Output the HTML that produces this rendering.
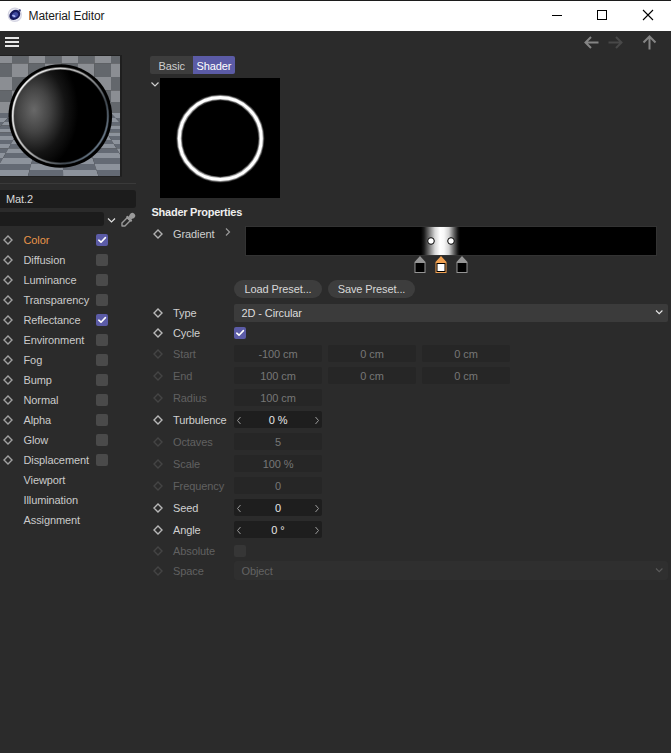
<!DOCTYPE html><html><head><meta charset="utf-8"><style>
html,body{margin:0;padding:0;}
body{width:671px;height:753px;background:#2b2b2b;position:relative;overflow:hidden;font-family:"Liberation Sans",sans-serif;}
.a{position:absolute;}
.t{position:absolute;white-space:nowrap;line-height:1;letter-spacing:-0.1px;}
</style></head><body>
<div class="a" style="left:0px;top:0px;width:671px;height:1px;background:#1c1c1c;border-radius:0px;"></div>
<div class="a" style="left:0px;top:1px;width:671px;height:30px;background:#ffffff;border-radius:0px;"></div>
<svg class="a" style="left:5px;top:5px" width="20" height="20"><defs><filter id="ib" x="-30%" y="-30%" width="160%" height="160%"><feGaussianBlur stdDeviation="0.8"/></filter></defs><g><g transform="translate(-5,-5)"><circle cx="14.8" cy="14.8" r="6.6" fill="#eeeef6" stroke="#d4d4e2" stroke-width="1.2"/><ellipse cx="14.8" cy="14.9" rx="5.9" ry="4.7" transform="rotate(-38 14.8 14.9)" fill="#161a5c"/><ellipse cx="15" cy="15" rx="3.4" ry="2.6" transform="rotate(-38 15 15)" fill="#3f4aa0"/><ellipse cx="13.8" cy="15.9" rx="1.8" ry="1.0" transform="rotate(20 13.8 15.9)" fill="#aab4f0"/><circle cx="19.8" cy="10.4" r="1.1" fill="#3a4080"/></g></g></svg>
<div class="t" style="left:28.5px;top:9.84px;font-size:12px;color:#1a1a1a;font-weight:normal;">Material Editor</div>
<div class="a" style="left:552px;top:15px;width:10px;height:1px;background:#000;border-radius:0px;"></div>
<div class="a" style="left:597px;top:10px;width:8px;height:8px;border:1px solid #000"></div>
<svg class="a" style="left:642px;top:9px" width="12" height="12"><path d="M1 1 L11 11 M11 1 L1 11" stroke="#000" stroke-width="1.1"/></svg>
<div class="a" style="left:5px;top:37px;width:14px;height:2px;background:#e8e8e8;border-radius:0px;"></div>
<div class="a" style="left:5px;top:41px;width:14px;height:2px;background:#e8e8e8;border-radius:0px;"></div>
<div class="a" style="left:5px;top:45px;width:14px;height:2px;background:#e8e8e8;border-radius:0px;"></div>
<svg class="a" style="left:583px;top:35px" width="17" height="15"><path d="M15.5 7.5 H2.5 M8 2 L2.5 7.5 L8 13" fill="none" stroke="#858585" stroke-width="2"/></svg>
<svg class="a" style="left:607px;top:35px" width="17" height="15"><path d="M1.5 7.5 H14.5 M9 2 L14.5 7.5 L9 13" fill="none" stroke="#484848" stroke-width="2"/></svg>
<svg class="a" style="left:642px;top:34px" width="15" height="16"><path d="M7.5 15.5 V2.5 M1.5 8.5 L7.5 2.5 L13.5 8.5" fill="none" stroke="#858585" stroke-width="2"/></svg>
<div class="a" style="left:0px;top:55px;width:122px;height:1px;background:#1f1f1f;border-radius:0px;"></div>
<svg class="a" style="left:0;top:56px" width="120" height="120">
<defs>
<filter id="cb" x="-5%" y="-5%" width="110%" height="110%"><feGaussianBlur stdDeviation="0.8"/></filter>
<radialGradient id="sph" gradientUnits="userSpaceOnUse" cx="34" cy="54" r="58" gradientTransform="translate(34 54) scale(0.9 1.25) translate(-34 -54)">
<stop offset="0" stop-color="#686868"/><stop offset="0.3" stop-color="#444444"/><stop offset="0.6" stop-color="#141414"/><stop offset="0.85" stop-color="#000"/>
</radialGradient>
<linearGradient id="rim" gradientUnits="userSpaceOnUse" x1="12" y1="30" x2="108" y2="95">
<stop offset="0" stop-color="#ffffff"/><stop offset="0.45" stop-color="#b0b0b0"/><stop offset="0.75" stop-color="#404850"/><stop offset="1" stop-color="#8094a8"/>
</linearGradient>
</defs>
<g><rect x="-4.5" y="0" width="16.5" height="7.5" fill="#8b8e93"/>
<rect x="12.0" y="0" width="16.5" height="7.5" fill="#63676c"/>
<rect x="28.5" y="0" width="16.5" height="7.5" fill="#8b8e93"/>
<rect x="45.0" y="0" width="16.5" height="7.5" fill="#63676c"/>
<rect x="61.5" y="0" width="16.5" height="7.5" fill="#8b8e93"/>
<rect x="78.0" y="0" width="16.5" height="7.5" fill="#63676c"/>
<rect x="94.5" y="0" width="16.5" height="7.5" fill="#8b8e93"/>
<rect x="111.0" y="0" width="16.5" height="7.5" fill="#63676c"/>
<rect x="-4.5" y="7.5" width="16.5" height="13.5" fill="#63676c"/>
<rect x="12.0" y="7.5" width="16.5" height="13.5" fill="#8b8e93"/>
<rect x="28.5" y="7.5" width="16.5" height="13.5" fill="#63676c"/>
<rect x="45.0" y="7.5" width="16.5" height="13.5" fill="#8b8e93"/>
<rect x="61.5" y="7.5" width="16.5" height="13.5" fill="#63676c"/>
<rect x="78.0" y="7.5" width="16.5" height="13.5" fill="#8b8e93"/>
<rect x="94.5" y="7.5" width="16.5" height="13.5" fill="#63676c"/>
<rect x="111.0" y="7.5" width="16.5" height="13.5" fill="#8b8e93"/>
<rect x="-4.5" y="21" width="16.5" height="13.5" fill="#8b8e93"/>
<rect x="12.0" y="21" width="16.5" height="13.5" fill="#63676c"/>
<rect x="28.5" y="21" width="16.5" height="13.5" fill="#8b8e93"/>
<rect x="45.0" y="21" width="16.5" height="13.5" fill="#63676c"/>
<rect x="61.5" y="21" width="16.5" height="13.5" fill="#8b8e93"/>
<rect x="78.0" y="21" width="16.5" height="13.5" fill="#63676c"/>
<rect x="94.5" y="21" width="16.5" height="13.5" fill="#8b8e93"/>
<rect x="111.0" y="21" width="16.5" height="13.5" fill="#63676c"/>
<rect x="-4.5" y="34.5" width="16.5" height="11.5" fill="#63676c"/>
<rect x="12.0" y="34.5" width="16.5" height="11.5" fill="#8b8e93"/>
<rect x="28.5" y="34.5" width="16.5" height="11.5" fill="#63676c"/>
<rect x="45.0" y="34.5" width="16.5" height="11.5" fill="#8b8e93"/>
<rect x="61.5" y="34.5" width="16.5" height="11.5" fill="#63676c"/>
<rect x="78.0" y="34.5" width="16.5" height="11.5" fill="#8b8e93"/>
<rect x="94.5" y="34.5" width="16.5" height="11.5" fill="#63676c"/>
<rect x="111.0" y="34.5" width="16.5" height="11.5" fill="#8b8e93"/>
<rect x="-4.5" y="46" width="16.5" height="11" fill="#8b8e93"/>
<rect x="12.0" y="46" width="16.5" height="11" fill="#63676c"/>
<rect x="28.5" y="46" width="16.5" height="11" fill="#8b8e93"/>
<rect x="45.0" y="46" width="16.5" height="11" fill="#63676c"/>
<rect x="61.5" y="46" width="16.5" height="11" fill="#8b8e93"/>
<rect x="78.0" y="46" width="16.5" height="11" fill="#63676c"/>
<rect x="94.5" y="46" width="16.5" height="11" fill="#8b8e93"/>
<rect x="111.0" y="46" width="16.5" height="11" fill="#63676c"/>
<polygon points="-54.0,57.0 -37.5,57.0 -46.3,62.0 -64.3,62.0" fill="#8d939c"/>
<polygon points="-37.5,57.0 -21.0,57.0 -28.3,62.0 -46.3,62.0" fill="#646a74"/>
<polygon points="-21.0,57.0 -4.5,57.0 -10.3,62.0 -28.3,62.0" fill="#8d939c"/>
<polygon points="-4.5,57.0 12.0,57.0 7.7,62.0 -10.3,62.0" fill="#646a74"/>
<polygon points="12.0,57.0 28.5,57.0 25.7,62.0 7.7,62.0" fill="#8d939c"/>
<polygon points="28.5,57.0 45.0,57.0 43.6,62.0 25.7,62.0" fill="#646a74"/>
<polygon points="45.0,57.0 61.5,57.0 61.6,62.0 43.6,62.0" fill="#8d939c"/>
<polygon points="61.5,57.0 78.0,57.0 79.6,62.0 61.6,62.0" fill="#646a74"/>
<polygon points="78.0,57.0 94.5,57.0 97.6,62.0 79.6,62.0" fill="#8d939c"/>
<polygon points="94.5,57.0 111.0,57.0 115.6,62.0 97.6,62.0" fill="#646a74"/>
<polygon points="111.0,57.0 127.5,57.0 133.6,62.0 115.6,62.0" fill="#8d939c"/>
<polygon points="127.5,57.0 144.0,57.0 151.6,62.0 133.6,62.0" fill="#646a74"/>
<polygon points="144.0,57.0 160.5,57.0 169.5,62.0 151.6,62.0" fill="#8d939c"/>
<polygon points="160.5,57.0 177.0,57.0 187.5,62.0 169.5,62.0" fill="#646a74"/>
<polygon points="177.0,57.0 193.5,57.0 205.5,62.0 187.5,62.0" fill="#8d939c"/>
<polygon points="-64.3,62.0 -46.3,62.0 -53.3,66.0 -72.5,66.0" fill="#646a74"/>
<polygon points="-46.3,62.0 -28.3,62.0 -34.1,66.0 -53.3,66.0" fill="#8d939c"/>
<polygon points="-28.3,62.0 -10.3,62.0 -14.9,66.0 -34.1,66.0" fill="#646a74"/>
<polygon points="-10.3,62.0 7.7,62.0 4.2,66.0 -14.9,66.0" fill="#8d939c"/>
<polygon points="7.7,62.0 25.7,62.0 23.4,66.0 4.2,66.0" fill="#646a74"/>
<polygon points="25.7,62.0 43.6,62.0 42.6,66.0 23.4,66.0" fill="#8d939c"/>
<polygon points="43.6,62.0 61.6,62.0 61.7,66.0 42.6,66.0" fill="#646a74"/>
<polygon points="61.6,62.0 79.6,62.0 80.9,66.0 61.7,66.0" fill="#8d939c"/>
<polygon points="79.6,62.0 97.6,62.0 100.1,66.0 80.9,66.0" fill="#646a74"/>
<polygon points="97.6,62.0 115.6,62.0 119.3,66.0 100.1,66.0" fill="#8d939c"/>
<polygon points="115.6,62.0 133.6,62.0 138.4,66.0 119.3,66.0" fill="#646a74"/>
<polygon points="133.6,62.0 151.6,62.0 157.6,66.0 138.4,66.0" fill="#8d939c"/>
<polygon points="151.6,62.0 169.5,62.0 176.8,66.0 157.6,66.0" fill="#646a74"/>
<polygon points="169.5,62.0 187.5,62.0 196.0,66.0 176.8,66.0" fill="#8d939c"/>
<polygon points="187.5,62.0 205.5,62.0 215.1,66.0 196.0,66.0" fill="#646a74"/>
<polygon points="-72.5,66.0 -53.3,66.0 -59.4,69.5 -79.7,69.5" fill="#8d939c"/>
<polygon points="-53.3,66.0 -34.1,66.0 -39.2,69.5 -59.4,69.5" fill="#646a74"/>
<polygon points="-34.1,66.0 -14.9,66.0 -19.0,69.5 -39.2,69.5" fill="#8d939c"/>
<polygon points="-14.9,66.0 4.2,66.0 1.2,69.5 -19.0,69.5" fill="#646a74"/>
<polygon points="4.2,66.0 23.4,66.0 21.4,69.5 1.2,69.5" fill="#8d939c"/>
<polygon points="23.4,66.0 42.6,66.0 41.6,69.5 21.4,69.5" fill="#646a74"/>
<polygon points="42.6,66.0 61.7,66.0 61.8,69.5 41.6,69.5" fill="#8d939c"/>
<polygon points="61.7,66.0 80.9,66.0 82.0,69.5 61.8,69.5" fill="#646a74"/>
<polygon points="80.9,66.0 100.1,66.0 102.3,69.5 82.0,69.5" fill="#8d939c"/>
<polygon points="100.1,66.0 119.3,66.0 122.5,69.5 102.3,69.5" fill="#646a74"/>
<polygon points="119.3,66.0 138.4,66.0 142.7,69.5 122.5,69.5" fill="#8d939c"/>
<polygon points="138.4,66.0 157.6,66.0 162.9,69.5 142.7,69.5" fill="#646a74"/>
<polygon points="157.6,66.0 176.8,66.0 183.1,69.5 162.9,69.5" fill="#8d939c"/>
<polygon points="176.8,66.0 196.0,66.0 203.3,69.5 183.1,69.5" fill="#646a74"/>
<polygon points="196.0,66.0 215.1,66.0 223.5,69.5 203.3,69.5" fill="#8d939c"/>
<polygon points="-79.7,69.5 -59.4,69.5 -65.6,73.0 -86.8,73.0" fill="#646a74"/>
<polygon points="-59.4,69.5 -39.2,69.5 -44.3,73.0 -65.6,73.0" fill="#8d939c"/>
<polygon points="-39.2,69.5 -19.0,69.5 -23.1,73.0 -44.3,73.0" fill="#646a74"/>
<polygon points="-19.0,69.5 1.2,69.5 -1.8,73.0 -23.1,73.0" fill="#8d939c"/>
<polygon points="1.2,69.5 21.4,69.5 19.4,73.0 -1.8,73.0" fill="#646a74"/>
<polygon points="21.4,69.5 41.6,69.5 40.7,73.0 19.4,73.0" fill="#8d939c"/>
<polygon points="41.6,69.5 61.8,69.5 61.9,73.0 40.7,73.0" fill="#646a74"/>
<polygon points="61.8,69.5 82.0,69.5 83.2,73.0 61.9,73.0" fill="#8d939c"/>
<polygon points="82.0,69.5 102.3,69.5 104.4,73.0 83.2,73.0" fill="#646a74"/>
<polygon points="102.3,69.5 122.5,69.5 125.7,73.0 104.4,73.0" fill="#8d939c"/>
<polygon points="122.5,69.5 142.7,69.5 146.9,73.0 125.7,73.0" fill="#646a74"/>
<polygon points="142.7,69.5 162.9,69.5 168.2,73.0 146.9,73.0" fill="#8d939c"/>
<polygon points="162.9,69.5 183.1,69.5 189.4,73.0 168.2,73.0" fill="#646a74"/>
<polygon points="183.1,69.5 203.3,69.5 210.7,73.0 189.4,73.0" fill="#8d939c"/>
<polygon points="203.3,69.5 223.5,69.5 231.9,73.0 210.7,73.0" fill="#646a74"/>
<polygon points="-86.8,73.0 -65.6,73.0 -71.7,76.5 -94.0,76.5" fill="#8d939c"/>
<polygon points="-65.6,73.0 -44.3,73.0 -49.4,76.5 -71.7,76.5" fill="#646a74"/>
<polygon points="-44.3,73.0 -23.1,73.0 -27.1,76.5 -49.4,76.5" fill="#8d939c"/>
<polygon points="-23.1,73.0 -1.8,73.0 -4.8,76.5 -27.1,76.5" fill="#646a74"/>
<polygon points="-1.8,73.0 19.4,73.0 17.4,76.5 -4.8,76.5" fill="#8d939c"/>
<polygon points="19.4,73.0 40.7,73.0 39.7,76.5 17.4,76.5" fill="#646a74"/>
<polygon points="40.7,73.0 61.9,73.0 62.0,76.5 39.7,76.5" fill="#8d939c"/>
<polygon points="61.9,73.0 83.2,73.0 84.3,76.5 62.0,76.5" fill="#646a74"/>
<polygon points="83.2,73.0 104.4,73.0 106.6,76.5 84.3,76.5" fill="#8d939c"/>
<polygon points="104.4,73.0 125.7,73.0 128.9,76.5 106.6,76.5" fill="#646a74"/>
<polygon points="125.7,73.0 146.9,73.0 151.2,76.5 128.9,76.5" fill="#8d939c"/>
<polygon points="146.9,73.0 168.2,73.0 173.5,76.5 151.2,76.5" fill="#646a74"/>
<polygon points="168.2,73.0 189.4,73.0 195.8,76.5 173.5,76.5" fill="#8d939c"/>
<polygon points="189.4,73.0 210.7,73.0 218.1,76.5 195.8,76.5" fill="#646a74"/>
<polygon points="210.7,73.0 231.9,73.0 240.4,76.5 218.1,76.5" fill="#8d939c"/>
<polygon points="-94.0,76.5 -71.7,76.5 -77.9,80.0 -101.2,80.0" fill="#646a74"/>
<polygon points="-71.7,76.5 -49.4,76.5 -54.5,80.0 -77.9,80.0" fill="#8d939c"/>
<polygon points="-49.4,76.5 -27.1,76.5 -31.2,80.0 -54.5,80.0" fill="#646a74"/>
<polygon points="-27.1,76.5 -4.8,76.5 -7.9,80.0 -31.2,80.0" fill="#8d939c"/>
<polygon points="-4.8,76.5 17.4,76.5 15.5,80.0 -7.9,80.0" fill="#646a74"/>
<polygon points="17.4,76.5 39.7,76.5 38.8,80.0 15.5,80.0" fill="#8d939c"/>
<polygon points="39.7,76.5 62.0,76.5 62.1,80.0 38.8,80.0" fill="#646a74"/>
<polygon points="62.0,76.5 84.3,76.5 85.5,80.0 62.1,80.0" fill="#8d939c"/>
<polygon points="84.3,76.5 106.6,76.5 108.8,80.0 85.5,80.0" fill="#646a74"/>
<polygon points="106.6,76.5 128.9,76.5 132.1,80.0 108.8,80.0" fill="#8d939c"/>
<polygon points="128.9,76.5 151.2,76.5 155.4,80.0 132.1,80.0" fill="#646a74"/>
<polygon points="151.2,76.5 173.5,76.5 178.8,80.0 155.4,80.0" fill="#8d939c"/>
<polygon points="173.5,76.5 195.8,76.5 202.1,80.0 178.8,80.0" fill="#646a74"/>
<polygon points="195.8,76.5 218.1,76.5 225.4,80.0 202.1,80.0" fill="#8d939c"/>
<polygon points="218.1,76.5 240.4,76.5 248.8,80.0 225.4,80.0" fill="#646a74"/>
<polygon points="-101.2,80.0 -77.9,80.0 -84.9,84.0 -109.4,84.0" fill="#8d939c"/>
<polygon points="-77.9,80.0 -54.5,80.0 -60.4,84.0 -84.9,84.0" fill="#646a74"/>
<polygon points="-54.5,80.0 -31.2,80.0 -35.8,84.0 -60.4,84.0" fill="#8d939c"/>
<polygon points="-31.2,80.0 -7.9,80.0 -11.3,84.0 -35.8,84.0" fill="#646a74"/>
<polygon points="-7.9,80.0 15.5,80.0 13.2,84.0 -11.3,84.0" fill="#8d939c"/>
<polygon points="15.5,80.0 38.8,80.0 37.7,84.0 13.2,84.0" fill="#646a74"/>
<polygon points="38.8,80.0 62.1,80.0 62.2,84.0 37.7,84.0" fill="#8d939c"/>
<polygon points="62.1,80.0 85.5,80.0 86.7,84.0 62.2,84.0" fill="#646a74"/>
<polygon points="85.5,80.0 108.8,80.0 111.3,84.0 86.7,84.0" fill="#8d939c"/>
<polygon points="108.8,80.0 132.1,80.0 135.8,84.0 111.3,84.0" fill="#646a74"/>
<polygon points="132.1,80.0 155.4,80.0 160.3,84.0 135.8,84.0" fill="#8d939c"/>
<polygon points="155.4,80.0 178.8,80.0 184.8,84.0 160.3,84.0" fill="#646a74"/>
<polygon points="178.8,80.0 202.1,80.0 209.3,84.0 184.8,84.0" fill="#8d939c"/>
<polygon points="202.1,80.0 225.4,80.0 233.9,84.0 209.3,84.0" fill="#646a74"/>
<polygon points="225.4,80.0 248.8,80.0 258.4,84.0 233.9,84.0" fill="#8d939c"/>
<polygon points="-109.4,84.0 -84.9,84.0 -91.9,88.0 -117.6,88.0" fill="#646a74"/>
<polygon points="-84.9,84.0 -60.4,84.0 -66.2,88.0 -91.9,88.0" fill="#8d939c"/>
<polygon points="-60.4,84.0 -35.8,84.0 -40.5,88.0 -66.2,88.0" fill="#646a74"/>
<polygon points="-35.8,84.0 -11.3,84.0 -14.8,88.0 -40.5,88.0" fill="#8d939c"/>
<polygon points="-11.3,84.0 13.2,84.0 10.9,88.0 -14.8,88.0" fill="#646a74"/>
<polygon points="13.2,84.0 37.7,84.0 36.6,88.0 10.9,88.0" fill="#8d939c"/>
<polygon points="37.7,84.0 62.2,84.0 62.3,88.0 36.6,88.0" fill="#646a74"/>
<polygon points="62.2,84.0 86.7,84.0 88.0,88.0 62.3,88.0" fill="#8d939c"/>
<polygon points="86.7,84.0 111.3,84.0 113.8,88.0 88.0,88.0" fill="#646a74"/>
<polygon points="111.3,84.0 135.8,84.0 139.5,88.0 113.8,88.0" fill="#8d939c"/>
<polygon points="135.8,84.0 160.3,84.0 165.2,88.0 139.5,88.0" fill="#646a74"/>
<polygon points="160.3,84.0 184.8,84.0 190.9,88.0 165.2,88.0" fill="#8d939c"/>
<polygon points="184.8,84.0 209.3,84.0 216.6,88.0 190.9,88.0" fill="#646a74"/>
<polygon points="209.3,84.0 233.9,84.0 242.3,88.0 216.6,88.0" fill="#8d939c"/>
<polygon points="233.9,84.0 258.4,84.0 268.0,88.0 242.3,88.0" fill="#646a74"/>
<polygon points="-117.6,88.0 -91.9,88.0 -99.8,92.5 -126.8,92.5" fill="#8d939c"/>
<polygon points="-91.9,88.0 -66.2,88.0 -72.8,92.5 -99.8,92.5" fill="#646a74"/>
<polygon points="-66.2,88.0 -40.5,88.0 -45.7,92.5 -72.8,92.5" fill="#8d939c"/>
<polygon points="-40.5,88.0 -14.8,88.0 -18.7,92.5 -45.7,92.5" fill="#646a74"/>
<polygon points="-14.8,88.0 10.9,88.0 8.4,92.5 -18.7,92.5" fill="#8d939c"/>
<polygon points="10.9,88.0 36.6,88.0 35.4,92.5 8.4,92.5" fill="#646a74"/>
<polygon points="36.6,88.0 62.3,88.0 62.5,92.5 35.4,92.5" fill="#8d939c"/>
<polygon points="62.3,88.0 88.0,88.0 89.5,92.5 62.5,92.5" fill="#646a74"/>
<polygon points="88.0,88.0 113.8,88.0 116.5,92.5 89.5,92.5" fill="#8d939c"/>
<polygon points="113.8,88.0 139.5,88.0 143.6,92.5 116.5,92.5" fill="#646a74"/>
<polygon points="139.5,88.0 165.2,88.0 170.6,92.5 143.6,92.5" fill="#8d939c"/>
<polygon points="165.2,88.0 190.9,88.0 197.7,92.5 170.6,92.5" fill="#646a74"/>
<polygon points="190.9,88.0 216.6,88.0 224.7,92.5 197.7,92.5" fill="#8d939c"/>
<polygon points="216.6,88.0 242.3,88.0 251.8,92.5 224.7,92.5" fill="#646a74"/>
<polygon points="242.3,88.0 268.0,88.0 278.8,92.5 251.8,92.5" fill="#8d939c"/>
<polygon points="-126.8,92.5 -99.8,92.5 -107.7,97.0 -136.1,97.0" fill="#646a74"/>
<polygon points="-99.8,92.5 -72.8,92.5 -79.3,97.0 -107.7,97.0" fill="#8d939c"/>
<polygon points="-72.8,92.5 -45.7,92.5 -50.9,97.0 -79.3,97.0" fill="#646a74"/>
<polygon points="-45.7,92.5 -18.7,92.5 -22.6,97.0 -50.9,97.0" fill="#8d939c"/>
<polygon points="-18.7,92.5 8.4,92.5 5.8,97.0 -22.6,97.0" fill="#646a74"/>
<polygon points="8.4,92.5 35.4,92.5 34.2,97.0 5.8,97.0" fill="#8d939c"/>
<polygon points="35.4,92.5 62.5,92.5 62.6,97.0 34.2,97.0" fill="#646a74"/>
<polygon points="62.5,92.5 89.5,92.5 91.0,97.0 62.6,97.0" fill="#8d939c"/>
<polygon points="89.5,92.5 116.5,92.5 119.3,97.0 91.0,97.0" fill="#646a74"/>
<polygon points="116.5,92.5 143.6,92.5 147.7,97.0 119.3,97.0" fill="#8d939c"/>
<polygon points="143.6,92.5 170.6,92.5 176.1,97.0 147.7,97.0" fill="#646a74"/>
<polygon points="170.6,92.5 197.7,92.5 204.5,97.0 176.1,97.0" fill="#8d939c"/>
<polygon points="197.7,92.5 224.7,92.5 232.9,97.0 204.5,97.0" fill="#646a74"/>
<polygon points="224.7,92.5 251.8,92.5 261.2,97.0 232.9,97.0" fill="#8d939c"/>
<polygon points="251.8,92.5 278.8,92.5 289.6,97.0 261.2,97.0" fill="#646a74"/>
<polygon points="-136.1,97.0 -107.7,97.0 -116.5,102.0 -146.3,102.0" fill="#8d939c"/>
<polygon points="-107.7,97.0 -79.3,97.0 -86.6,102.0 -116.5,102.0" fill="#646a74"/>
<polygon points="-79.3,97.0 -50.9,97.0 -56.7,102.0 -86.6,102.0" fill="#8d939c"/>
<polygon points="-50.9,97.0 -22.6,97.0 -26.9,102.0 -56.7,102.0" fill="#646a74"/>
<polygon points="-22.6,97.0 5.8,97.0 3.0,102.0 -26.9,102.0" fill="#8d939c"/>
<polygon points="5.8,97.0 34.2,97.0 32.8,102.0 3.0,102.0" fill="#646a74"/>
<polygon points="34.2,97.0 62.6,97.0 62.7,102.0 32.8,102.0" fill="#8d939c"/>
<polygon points="62.6,97.0 91.0,97.0 92.6,102.0 62.7,102.0" fill="#646a74"/>
<polygon points="91.0,97.0 119.3,97.0 122.4,102.0 92.6,102.0" fill="#8d939c"/>
<polygon points="119.3,97.0 147.7,97.0 152.3,102.0 122.4,102.0" fill="#646a74"/>
<polygon points="147.7,97.0 176.1,97.0 182.2,102.0 152.3,102.0" fill="#8d939c"/>
<polygon points="176.1,97.0 204.5,97.0 212.0,102.0 182.2,102.0" fill="#646a74"/>
<polygon points="204.5,97.0 232.9,97.0 241.9,102.0 212.0,102.0" fill="#8d939c"/>
<polygon points="232.9,97.0 261.2,97.0 271.8,102.0 241.9,102.0" fill="#646a74"/>
<polygon points="261.2,97.0 289.6,97.0 301.6,102.0 271.8,102.0" fill="#8d939c"/>
<polygon points="-146.3,102.0 -116.5,102.0 -127.0,108.0 -158.7,108.0" fill="#646a74"/>
<polygon points="-116.5,102.0 -86.6,102.0 -95.4,108.0 -127.0,108.0" fill="#8d939c"/>
<polygon points="-86.6,102.0 -56.7,102.0 -63.7,108.0 -95.4,108.0" fill="#646a74"/>
<polygon points="-56.7,102.0 -26.9,102.0 -32.1,108.0 -63.7,108.0" fill="#8d939c"/>
<polygon points="-26.9,102.0 3.0,102.0 -0.4,108.0 -32.1,108.0" fill="#646a74"/>
<polygon points="3.0,102.0 32.8,102.0 31.2,108.0 -0.4,108.0" fill="#8d939c"/>
<polygon points="32.8,102.0 62.7,102.0 62.9,108.0 31.2,108.0" fill="#646a74"/>
<polygon points="62.7,102.0 92.6,102.0 94.5,108.0 62.9,108.0" fill="#8d939c"/>
<polygon points="92.6,102.0 122.4,102.0 126.2,108.0 94.5,108.0" fill="#646a74"/>
<polygon points="122.4,102.0 152.3,102.0 157.8,108.0 126.2,108.0" fill="#8d939c"/>
<polygon points="152.3,102.0 182.2,102.0 189.5,108.0 157.8,108.0" fill="#646a74"/>
<polygon points="182.2,102.0 212.0,102.0 221.1,108.0 189.5,108.0" fill="#8d939c"/>
<polygon points="212.0,102.0 241.9,102.0 252.8,108.0 221.1,108.0" fill="#646a74"/>
<polygon points="241.9,102.0 271.8,102.0 284.4,108.0 252.8,108.0" fill="#8d939c"/>
<polygon points="271.8,102.0 301.6,102.0 316.1,108.0 284.4,108.0" fill="#646a74"/>
<polygon points="-158.7,108.0 -127.0,108.0 -137.5,114.0 -171.0,114.0" fill="#8d939c"/>
<polygon points="-127.0,108.0 -95.4,108.0 -104.1,114.0 -137.5,114.0" fill="#646a74"/>
<polygon points="-95.4,108.0 -63.7,108.0 -70.7,114.0 -104.1,114.0" fill="#8d939c"/>
<polygon points="-63.7,108.0 -32.1,108.0 -37.2,114.0 -70.7,114.0" fill="#646a74"/>
<polygon points="-32.1,108.0 -0.4,108.0 -3.8,114.0 -37.2,114.0" fill="#8d939c"/>
<polygon points="-0.4,108.0 31.2,108.0 29.6,114.0 -3.8,114.0" fill="#646a74"/>
<polygon points="31.2,108.0 62.9,108.0 63.0,114.0 29.6,114.0" fill="#8d939c"/>
<polygon points="62.9,108.0 94.5,108.0 96.5,114.0 63.0,114.0" fill="#646a74"/>
<polygon points="94.5,108.0 126.2,108.0 129.9,114.0 96.5,114.0" fill="#8d939c"/>
<polygon points="126.2,108.0 157.8,108.0 163.3,114.0 129.9,114.0" fill="#646a74"/>
<polygon points="157.8,108.0 189.5,108.0 196.8,114.0 163.3,114.0" fill="#8d939c"/>
<polygon points="189.5,108.0 221.1,108.0 230.2,114.0 196.8,114.0" fill="#646a74"/>
<polygon points="221.1,108.0 252.8,108.0 263.6,114.0 230.2,114.0" fill="#8d939c"/>
<polygon points="252.8,108.0 284.4,108.0 297.0,114.0 263.6,114.0" fill="#646a74"/>
<polygon points="284.4,108.0 316.1,108.0 330.5,114.0 297.0,114.0" fill="#8d939c"/>
<polygon points="-171.0,114.0 -137.5,114.0 -149.8,121.0 -185.3,121.0" fill="#646a74"/>
<polygon points="-137.5,114.0 -104.1,114.0 -114.3,121.0 -149.8,121.0" fill="#8d939c"/>
<polygon points="-104.1,114.0 -70.7,114.0 -78.8,121.0 -114.3,121.0" fill="#646a74"/>
<polygon points="-70.7,114.0 -37.2,114.0 -43.3,121.0 -78.8,121.0" fill="#8d939c"/>
<polygon points="-37.2,114.0 -3.8,114.0 -7.8,121.0 -43.3,121.0" fill="#646a74"/>
<polygon points="-3.8,114.0 29.6,114.0 27.7,121.0 -7.8,121.0" fill="#8d939c"/>
<polygon points="29.6,114.0 63.0,114.0 63.2,121.0 27.7,121.0" fill="#646a74"/>
<polygon points="63.0,114.0 96.5,114.0 98.7,121.0 63.2,121.0" fill="#8d939c"/>
<polygon points="96.5,114.0 129.9,114.0 134.2,121.0 98.7,121.0" fill="#646a74"/>
<polygon points="129.9,114.0 163.3,114.0 169.8,121.0 134.2,121.0" fill="#8d939c"/>
<polygon points="163.3,114.0 196.8,114.0 205.3,121.0 169.8,121.0" fill="#646a74"/>
<polygon points="196.8,114.0 230.2,114.0 240.8,121.0 205.3,121.0" fill="#8d939c"/>
<polygon points="230.2,114.0 263.6,114.0 276.3,121.0 240.8,121.0" fill="#646a74"/>
<polygon points="263.6,114.0 297.0,114.0 311.8,121.0 276.3,121.0" fill="#8d939c"/>
<polygon points="297.0,114.0 330.5,114.0 347.3,121.0 311.8,121.0" fill="#646a74"/></g>
<circle cx="60.3" cy="60" r="51.8" fill="#000"/>
<circle cx="60.3" cy="60" r="48" fill="url(#sph)"/>
<circle cx="60.3" cy="60" r="47.6" fill="none" stroke="url(#rim)" stroke-width="2.6" opacity="0.45"/>
<circle cx="60.3" cy="60" r="47.6" fill="none" stroke="url(#rim)" stroke-width="1.4"/>
</svg>
<div class="a" style="left:120px;top:56px;width:2px;height:120px;background:#1f1f1f;border-radius:0px;"></div>
<div class="a" style="left:0px;top:176px;width:122px;height:1px;background:#222;border-radius:0px;"></div>
<div class="a" style="left:0px;top:183px;width:136px;height:1px;background:#3a3a3a;border-radius:0px;"></div>
<div class="a" style="left:-4px;top:190px;width:140px;height:18px;background:#1c1c1c;border-radius:3px;"></div>
<div class="t" style="left:6px;top:193.69px;font-size:11px;color:#d8d8d8;font-weight:normal;">Mat.2</div>
<div class="a" style="left:-4px;top:212px;width:108px;height:14px;background:#1c1c1c;border-radius:3px;"></div>
<svg class="a" style="left:107px;top:217px" width="9" height="7"><path d="M1 1.5 L4.5 5 L8 1.5" fill="none" stroke="#e0e0e0" stroke-width="1.2"/></svg>
<svg class="a" style="left:116px;top:208px" width="24" height="24"><g transform="translate(5.6,18.4) rotate(-45)"><path d="M0.6 0 L2.6 -2.1 L10 -2.1 L10 2.1 L2.6 2.1 Z" fill="none" stroke="#9a9a9a" stroke-width="1.4" stroke-linejoin="round"/><rect x="9.6" y="-3.6" width="2.2" height="7.2" rx="0.8" fill="#9a9a9a"/><rect x="11.5" y="-2" width="3" height="4" fill="#9a9a9a"/><circle cx="15.2" cy="0" r="2.8" fill="#9a9a9a"/></g></svg>
<svg class="a" style="left:2px;top:234px" width="12" height="12"><path d="M6 2 L10 6 L6 10 L2 6 Z" fill="none" stroke="#a2a2a2" stroke-width="1.4"/></svg>
<div class="a" style="left:96px;top:234px;width:12px;height:12px;background:#5b5ba6;border-radius:2px;"></div>
<svg class="a" style="left:96px;top:234px" width="12" height="12"><path d="M2.8 6.2 L5 8.2 L9.4 3.6" fill="none" stroke="#fff" stroke-width="1.6" stroke-linecap="round" stroke-linejoin="round"/></svg>
<div class="t" style="left:23.5px;top:234.69px;font-size:11px;color:#e8954a;font-weight:normal;">Color</div>
<svg class="a" style="left:2px;top:254px" width="12" height="12"><path d="M6 2 L10 6 L6 10 L2 6 Z" fill="none" stroke="#a2a2a2" stroke-width="1.4"/></svg>
<div class="a" style="left:96px;top:254px;width:12px;height:12px;background:#4a4a4a;border-radius:2px;"></div>
<div class="t" style="left:23.5px;top:254.69px;font-size:11px;color:#cacaca;font-weight:normal;">Diffusion</div>
<svg class="a" style="left:2px;top:274px" width="12" height="12"><path d="M6 2 L10 6 L6 10 L2 6 Z" fill="none" stroke="#a2a2a2" stroke-width="1.4"/></svg>
<div class="a" style="left:96px;top:274px;width:12px;height:12px;background:#4a4a4a;border-radius:2px;"></div>
<div class="t" style="left:23.5px;top:274.69px;font-size:11px;color:#cacaca;font-weight:normal;">Luminance</div>
<svg class="a" style="left:2px;top:294px" width="12" height="12"><path d="M6 2 L10 6 L6 10 L2 6 Z" fill="none" stroke="#a2a2a2" stroke-width="1.4"/></svg>
<div class="a" style="left:96px;top:294px;width:12px;height:12px;background:#4a4a4a;border-radius:2px;"></div>
<div class="t" style="left:23.5px;top:294.69px;font-size:11px;color:#cacaca;font-weight:normal;">Transparency</div>
<svg class="a" style="left:2px;top:314px" width="12" height="12"><path d="M6 2 L10 6 L6 10 L2 6 Z" fill="none" stroke="#a2a2a2" stroke-width="1.4"/></svg>
<div class="a" style="left:96px;top:314px;width:12px;height:12px;background:#5b5ba6;border-radius:2px;"></div>
<svg class="a" style="left:96px;top:314px" width="12" height="12"><path d="M2.8 6.2 L5 8.2 L9.4 3.6" fill="none" stroke="#fff" stroke-width="1.6" stroke-linecap="round" stroke-linejoin="round"/></svg>
<div class="t" style="left:23.5px;top:314.69px;font-size:11px;color:#cacaca;font-weight:normal;">Reflectance</div>
<svg class="a" style="left:2px;top:334px" width="12" height="12"><path d="M6 2 L10 6 L6 10 L2 6 Z" fill="none" stroke="#a2a2a2" stroke-width="1.4"/></svg>
<div class="a" style="left:96px;top:334px;width:12px;height:12px;background:#4a4a4a;border-radius:2px;"></div>
<div class="t" style="left:23.5px;top:334.69px;font-size:11px;color:#cacaca;font-weight:normal;">Environment</div>
<svg class="a" style="left:2px;top:354px" width="12" height="12"><path d="M6 2 L10 6 L6 10 L2 6 Z" fill="none" stroke="#a2a2a2" stroke-width="1.4"/></svg>
<div class="a" style="left:96px;top:354px;width:12px;height:12px;background:#4a4a4a;border-radius:2px;"></div>
<div class="t" style="left:23.5px;top:354.69px;font-size:11px;color:#cacaca;font-weight:normal;">Fog</div>
<svg class="a" style="left:2px;top:374px" width="12" height="12"><path d="M6 2 L10 6 L6 10 L2 6 Z" fill="none" stroke="#a2a2a2" stroke-width="1.4"/></svg>
<div class="a" style="left:96px;top:374px;width:12px;height:12px;background:#4a4a4a;border-radius:2px;"></div>
<div class="t" style="left:23.5px;top:374.69px;font-size:11px;color:#cacaca;font-weight:normal;">Bump</div>
<svg class="a" style="left:2px;top:394px" width="12" height="12"><path d="M6 2 L10 6 L6 10 L2 6 Z" fill="none" stroke="#a2a2a2" stroke-width="1.4"/></svg>
<div class="a" style="left:96px;top:394px;width:12px;height:12px;background:#4a4a4a;border-radius:2px;"></div>
<div class="t" style="left:23.5px;top:394.69px;font-size:11px;color:#cacaca;font-weight:normal;">Normal</div>
<svg class="a" style="left:2px;top:414px" width="12" height="12"><path d="M6 2 L10 6 L6 10 L2 6 Z" fill="none" stroke="#a2a2a2" stroke-width="1.4"/></svg>
<div class="a" style="left:96px;top:414px;width:12px;height:12px;background:#4a4a4a;border-radius:2px;"></div>
<div class="t" style="left:23.5px;top:414.69px;font-size:11px;color:#cacaca;font-weight:normal;">Alpha</div>
<svg class="a" style="left:2px;top:434px" width="12" height="12"><path d="M6 2 L10 6 L6 10 L2 6 Z" fill="none" stroke="#a2a2a2" stroke-width="1.4"/></svg>
<div class="a" style="left:96px;top:434px;width:12px;height:12px;background:#4a4a4a;border-radius:2px;"></div>
<div class="t" style="left:23.5px;top:434.69px;font-size:11px;color:#cacaca;font-weight:normal;">Glow</div>
<svg class="a" style="left:2px;top:454px" width="12" height="12"><path d="M6 2 L10 6 L6 10 L2 6 Z" fill="none" stroke="#a2a2a2" stroke-width="1.4"/></svg>
<div class="a" style="left:96px;top:454px;width:12px;height:12px;background:#4a4a4a;border-radius:2px;"></div>
<div class="t" style="left:23.5px;top:454.69px;font-size:11px;color:#cacaca;font-weight:normal;">Displacement</div>
<div class="t" style="left:23.5px;top:474.69px;font-size:11px;color:#cacaca;font-weight:normal;">Viewport</div>
<div class="t" style="left:23.5px;top:494.69px;font-size:11px;color:#cacaca;font-weight:normal;">Illumination</div>
<div class="t" style="left:23.5px;top:514.69px;font-size:11px;color:#cacaca;font-weight:normal;">Assignment</div>
<div class="a" style="left:150px;top:56px;width:43px;height:18px;background:#3d3d3d;border-radius:2px;border-top-right-radius:0;border-bottom-right-radius:0;"></div>
<div class="a" style="left:193px;top:56px;width:42px;height:18px;background:#5b5ba6;border-radius:2px;border-top-left-radius:0;border-bottom-left-radius:0;"></div>
<div class="t" style="left:158.5px;top:60.69px;font-size:11px;color:#cfcfcf;font-weight:normal;">Basic</div>
<div class="t" style="left:196.5px;top:60.69px;font-size:11px;color:#ffffff;font-weight:normal;">Shader</div>
<svg class="a" style="left:150px;top:81px" width="10" height="7"><path d="M1.5 1.5 L5 5 L8.5 1.5" fill="none" stroke="#d0d0d0" stroke-width="1.2"/></svg>
<svg class="a" style="left:160px;top:78px" width="120" height="120">
<defs><filter id="bl" x="-20%" y="-20%" width="140%" height="140%"><feGaussianBlur stdDeviation="0.8"/></filter></defs>
<rect width="120" height="120" fill="#000"/>
<circle cx="60.3" cy="60.5" r="41" fill="none" stroke="#fff" stroke-width="6.2" opacity="0.2"/><circle cx="60.3" cy="60.5" r="41" fill="none" stroke="#fff" stroke-width="4.6" opacity="0.5"/><circle cx="60.3" cy="60.5" r="41" fill="none" stroke="#fff" stroke-width="2.9"/>
</svg>
<div class="t" style="left:151.5px;top:207.19px;font-size:11px;color:#eeeeee;font-weight:bold;letter-spacing:-0.25px;">Shader Properties</div>
<svg class="a" style="left:152px;top:228px" width="12" height="12"><path d="M6 2 L10 6 L6 10 L2 6 Z" fill="none" stroke="#b0b0b0" stroke-width="1.4"/></svg>
<div class="t" style="left:173px;top:228.69px;font-size:11px;color:#cfcfcf;font-weight:normal;">Gradient</div>
<svg class="a" style="left:224px;top:227px" width="8" height="10"><path d="M2 1.5 L5.5 5 L2 8.5" fill="none" stroke="#9a9a9a" stroke-width="1.2"/></svg>
<div class="a" style="left:245px;top:226px;width:412px;height:30px;background:#333;border-radius:0px;"></div>
<div class="a" style="left:246px;top:227px;width:410px;height:28px;background:linear-gradient(90deg,#000 0px,#000 175px,#1a1a1a 178px,#707070 183px,#d8d8d8 189px,#fff 194px,#f8f8f8 198px,#d0d0d0 203px,#606060 208px,#141414 212px,#000 214px,#000 410px)"></div>
<svg class="a" style="left:425.6px;top:235.5px" width="10" height="10"><circle cx="5" cy="5" r="3.3" fill="#fff" stroke="#000" stroke-width="1"/></svg>
<svg class="a" style="left:446.3px;top:235.5px" width="10" height="10"><circle cx="5" cy="5" r="3.3" fill="#fff" stroke="#000" stroke-width="1"/></svg>
<svg class="a" style="left:413.5px;top:255px" width="12" height="19"><path d="M6 1 L11.5 7 L11.5 18 L0.5 18 L0.5 7 Z" fill="#959595"/><rect x="1.5" y="8" width="9" height="9" fill="#000"/></svg>
<svg class="a" style="left:434.5px;top:255px" width="12" height="19"><path d="M6 1 L11.5 7 L11.5 18 L0.5 18 L0.5 7 Z" fill="#f0a050"/><rect x="1.5" y="8" width="9" height="9" fill="#000"/><rect x="2.5" y="9" width="7" height="7" fill="#fff"/></svg>
<svg class="a" style="left:455.5px;top:255px" width="12" height="19"><path d="M6 1 L11.5 7 L11.5 18 L0.5 18 L0.5 7 Z" fill="#959595"/><rect x="1.5" y="8" width="9" height="9" fill="#000"/></svg>
<div class="a" style="left:234px;top:280px;width:88px;height:18px;background:#3d3d3d;border-radius:9px;"></div>
<div class="t" style="left:178.0px;width:200px;text-align:center;top:283.69px;font-size:11px;color:#d8d8d8">Load Preset...</div>
<div class="a" style="left:328px;top:280px;width:87px;height:18px;background:#3d3d3d;border-radius:9px;"></div>
<div class="t" style="left:271.5px;width:200px;text-align:center;top:283.69px;font-size:11px;color:#d8d8d8">Save Preset...</div>
<svg class="a" style="left:152px;top:307px" width="12" height="12"><path d="M6 2 L10 6 L6 10 L2 6 Z" fill="none" stroke="#b8b8b8" stroke-width="1.4"/></svg>
<div class="t" style="left:173px;top:307.69px;font-size:11px;color:#d0d0d0;font-weight:normal;">Type</div>
<div class="a" style="left:234px;top:304px;width:434px;height:18px;background:#3b3b3b;border-radius:2px;"></div>
<div class="t" style="left:241.5px;top:307.69px;font-size:11px;color:#dddddd;font-weight:normal;">2D - Circular</div>
<svg class="a" style="left:655px;top:309px" width="9" height="7"><path d="M1 1.5 L4.2 4.7 L7.4 1.5" fill="none" stroke="#e8e8e8" stroke-width="1.1"/></svg>
<svg class="a" style="left:152px;top:327px" width="12" height="12"><path d="M6 2 L10 6 L6 10 L2 6 Z" fill="none" stroke="#b8b8b8" stroke-width="1.4"/></svg>
<div class="t" style="left:173px;top:327.69px;font-size:11px;color:#d0d0d0;font-weight:normal;">Cycle</div>
<div class="a" style="left:234px;top:327px;width:12px;height:12px;background:#5b5ba6;border-radius:2px;"></div>
<svg class="a" style="left:234px;top:327px" width="12" height="12"><path d="M2.8 6.2 L5 8.2 L9.4 3.6" fill="none" stroke="#fff" stroke-width="1.6" stroke-linecap="round" stroke-linejoin="round"/></svg>
<svg class="a" style="left:152px;top:348px" width="12" height="12"><path d="M6 2 L10 6 L6 10 L2 6 Z" fill="none" stroke="#444444" stroke-width="1.4"/></svg>
<div class="t" style="left:173px;top:348.69px;font-size:11px;color:#616161;font-weight:normal;">Start</div>
<div class="a" style="left:234px;top:345px;width:88px;height:17px;background:#262626;border-radius:2px;"></div>
<div class="t" style="left:178.0px;width:200px;text-align:center;top:348.69px;font-size:11px;color:#777777">-100 cm</div>
<div class="a" style="left:328px;top:345px;width:88px;height:17px;background:#262626;border-radius:2px;"></div>
<div class="t" style="left:272.0px;width:200px;text-align:center;top:348.69px;font-size:11px;color:#777777">0 cm</div>
<div class="a" style="left:422px;top:345px;width:88px;height:17px;background:#262626;border-radius:2px;"></div>
<div class="t" style="left:366.0px;width:200px;text-align:center;top:348.69px;font-size:11px;color:#777777">0 cm</div>
<svg class="a" style="left:152px;top:370px" width="12" height="12"><path d="M6 2 L10 6 L6 10 L2 6 Z" fill="none" stroke="#444444" stroke-width="1.4"/></svg>
<div class="t" style="left:173px;top:370.69px;font-size:11px;color:#616161;font-weight:normal;">End</div>
<div class="a" style="left:234px;top:367px;width:88px;height:17px;background:#262626;border-radius:2px;"></div>
<div class="t" style="left:178.0px;width:200px;text-align:center;top:370.69px;font-size:11px;color:#777777">100 cm</div>
<div class="a" style="left:328px;top:367px;width:88px;height:17px;background:#262626;border-radius:2px;"></div>
<div class="t" style="left:272.0px;width:200px;text-align:center;top:370.69px;font-size:11px;color:#777777">0 cm</div>
<div class="a" style="left:422px;top:367px;width:88px;height:17px;background:#262626;border-radius:2px;"></div>
<div class="t" style="left:366.0px;width:200px;text-align:center;top:370.69px;font-size:11px;color:#777777">0 cm</div>
<svg class="a" style="left:152px;top:392px" width="12" height="12"><path d="M6 2 L10 6 L6 10 L2 6 Z" fill="none" stroke="#444444" stroke-width="1.4"/></svg>
<div class="t" style="left:173px;top:392.69px;font-size:11px;color:#616161;font-weight:normal;">Radius</div>
<div class="a" style="left:234px;top:389px;width:88px;height:17px;background:#262626;border-radius:2px;"></div>
<div class="t" style="left:178.0px;width:200px;text-align:center;top:392.69px;font-size:11px;color:#777777">100 cm</div>
<svg class="a" style="left:152px;top:414px" width="12" height="12"><path d="M6 2 L10 6 L6 10 L2 6 Z" fill="none" stroke="#b8b8b8" stroke-width="1.4"/></svg>
<div class="t" style="left:173px;top:414.69px;font-size:11px;color:#d0d0d0;font-weight:normal;">Turbulence</div>
<div class="a" style="left:234px;top:411px;width:88px;height:17px;background:#1e1e1e;border-radius:2px;"></div>
<div class="t" style="left:178.0px;width:200px;text-align:center;top:414.69px;font-size:11px;color:#e6e6e6">0 %</div>
<svg class="a" style="left:236px;top:416px" width="6" height="9"><path d="M4.5 1 L1.5 4.5 L4.5 8" fill="none" stroke="#9a9a9a" stroke-width="1"/></svg>
<svg class="a" style="left:314px;top:416px" width="6" height="9"><path d="M1.5 1 L4.5 4.5 L1.5 8" fill="none" stroke="#9a9a9a" stroke-width="1"/></svg>
<svg class="a" style="left:152px;top:436px" width="12" height="12"><path d="M6 2 L10 6 L6 10 L2 6 Z" fill="none" stroke="#444444" stroke-width="1.4"/></svg>
<div class="t" style="left:173px;top:436.69px;font-size:11px;color:#616161;font-weight:normal;">Octaves</div>
<div class="a" style="left:234px;top:433px;width:88px;height:17px;background:#262626;border-radius:2px;"></div>
<div class="t" style="left:178.0px;width:200px;text-align:center;top:436.69px;font-size:11px;color:#777777">5</div>
<svg class="a" style="left:152px;top:458px" width="12" height="12"><path d="M6 2 L10 6 L6 10 L2 6 Z" fill="none" stroke="#444444" stroke-width="1.4"/></svg>
<div class="t" style="left:173px;top:458.69px;font-size:11px;color:#616161;font-weight:normal;">Scale</div>
<div class="a" style="left:234px;top:455px;width:88px;height:17px;background:#262626;border-radius:2px;"></div>
<div class="t" style="left:178.0px;width:200px;text-align:center;top:458.69px;font-size:11px;color:#777777">100 %</div>
<svg class="a" style="left:152px;top:480px" width="12" height="12"><path d="M6 2 L10 6 L6 10 L2 6 Z" fill="none" stroke="#444444" stroke-width="1.4"/></svg>
<div class="t" style="left:173px;top:480.69px;font-size:11px;color:#616161;font-weight:normal;">Frequency</div>
<div class="a" style="left:234px;top:477px;width:88px;height:17px;background:#262626;border-radius:2px;"></div>
<div class="t" style="left:178.0px;width:200px;text-align:center;top:480.69px;font-size:11px;color:#777777">0</div>
<svg class="a" style="left:152px;top:502px" width="12" height="12"><path d="M6 2 L10 6 L6 10 L2 6 Z" fill="none" stroke="#b8b8b8" stroke-width="1.4"/></svg>
<div class="t" style="left:173px;top:502.69px;font-size:11px;color:#d0d0d0;font-weight:normal;">Seed</div>
<div class="a" style="left:234px;top:499px;width:88px;height:17px;background:#1e1e1e;border-radius:2px;"></div>
<div class="t" style="left:178.0px;width:200px;text-align:center;top:502.69px;font-size:11px;color:#e6e6e6">0</div>
<svg class="a" style="left:236px;top:504px" width="6" height="9"><path d="M4.5 1 L1.5 4.5 L4.5 8" fill="none" stroke="#9a9a9a" stroke-width="1"/></svg>
<svg class="a" style="left:314px;top:504px" width="6" height="9"><path d="M1.5 1 L4.5 4.5 L1.5 8" fill="none" stroke="#9a9a9a" stroke-width="1"/></svg>
<svg class="a" style="left:152px;top:524px" width="12" height="12"><path d="M6 2 L10 6 L6 10 L2 6 Z" fill="none" stroke="#b8b8b8" stroke-width="1.4"/></svg>
<div class="t" style="left:173px;top:524.69px;font-size:11px;color:#d0d0d0;font-weight:normal;">Angle</div>
<div class="a" style="left:234px;top:521px;width:88px;height:17px;background:#1e1e1e;border-radius:2px;"></div>
<div class="t" style="left:178.0px;width:200px;text-align:center;top:524.69px;font-size:11px;color:#e6e6e6">0 °</div>
<svg class="a" style="left:236px;top:526px" width="6" height="9"><path d="M4.5 1 L1.5 4.5 L4.5 8" fill="none" stroke="#9a9a9a" stroke-width="1"/></svg>
<svg class="a" style="left:314px;top:526px" width="6" height="9"><path d="M1.5 1 L4.5 4.5 L1.5 8" fill="none" stroke="#9a9a9a" stroke-width="1"/></svg>
<svg class="a" style="left:152px;top:545px" width="12" height="12"><path d="M6 2 L10 6 L6 10 L2 6 Z" fill="none" stroke="#444444" stroke-width="1.4"/></svg>
<div class="t" style="left:173px;top:545.69px;font-size:11px;color:#616161;font-weight:normal;">Absolute</div>
<div class="a" style="left:234px;top:545px;width:12px;height:12px;background:#363636;border-radius:2px;"></div>
<svg class="a" style="left:152px;top:565px" width="12" height="12"><path d="M6 2 L10 6 L6 10 L2 6 Z" fill="none" stroke="#444444" stroke-width="1.4"/></svg>
<div class="t" style="left:173px;top:565.69px;font-size:11px;color:#616161;font-weight:normal;">Space</div>
<div class="a" style="left:234px;top:561px;width:434px;height:19px;background:#2f2f2f;border-radius:3px;"></div>
<div class="t" style="left:241.5px;top:565.69px;font-size:11px;color:#636363;font-weight:normal;">Object</div>
<svg class="a" style="left:655px;top:567px" width="9" height="7"><path d="M1 1.5 L4.2 4.7 L7.4 1.5" fill="none" stroke="#5a5a5a" stroke-width="1.1"/></svg>
</body></html>
